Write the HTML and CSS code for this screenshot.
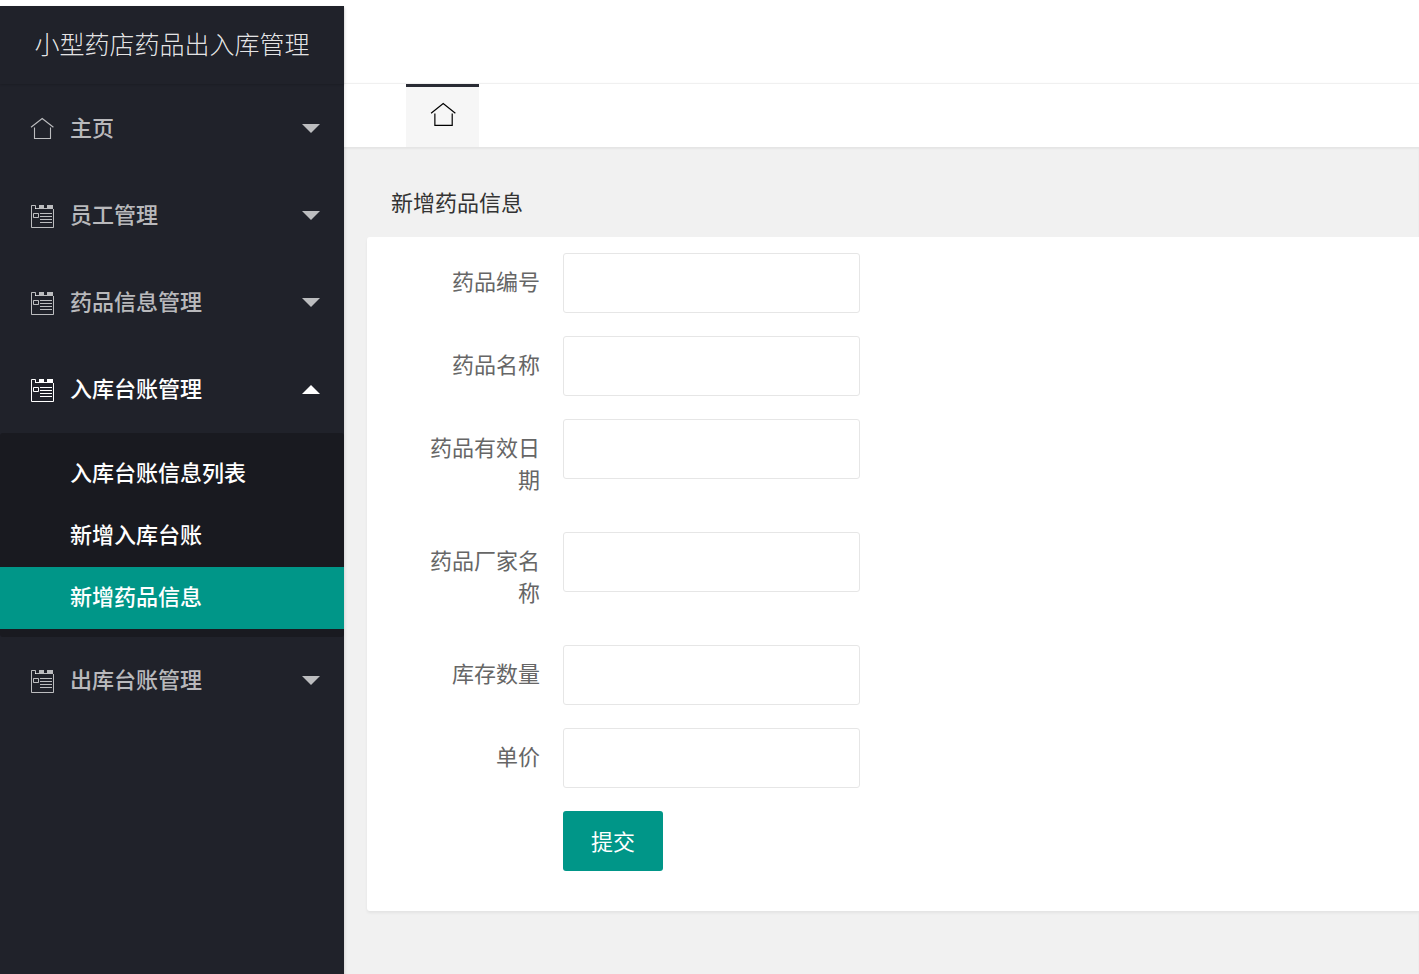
FILE: index.html
```html
<!DOCTYPE html>
<html lang="zh-CN">
<head>
<meta charset="utf-8">
<title>新增药品信息</title>
<link rel="stylesheet" href="styles.css">
</head>
<body>
<svg class="sprite" aria-hidden="true">
  <symbol id="home" viewBox="0 0 24 24">
    <path d="M1 10.3 12.2 1.5l11.2 8.8M4.5 10.5v11h16v-11" fill="none" stroke="currentColor" stroke-width="1.1"/>
  </symbol>
  <symbol id="notes" viewBox="0 0 24 24">
    <path d="M5.5 5V1.5h-4v22h22V5" fill="none" stroke="currentColor"/>
    <path d="M5 4h18v1H5zM9 1h5v4H9zM17 1h6v4h-6z" fill="currentColor"/>
    <path d="M3.5 9.5h5v4h-5zM10 9.5h12M10 12.5h12M10 15.5h12M10 18.5h12" fill="none" stroke="currentColor"/>
  </symbol>
  <symbol id="down" viewBox="0 0 18 9"><path d="M0 0h18L9 9z" fill="currentColor"/></symbol>
  <symbol id="up" viewBox="0 0 18 9"><path d="M0 9h18L9 0z" fill="currentColor"/></symbol>
</svg>
<div class="app">
  <aside class="sidebar">
    <div class="logo">小型药店药品出入库管理</div>
    <nav class="menu">
      <button class="menu-item" type="button"><svg class="icon"><use href="#home"/></svg><span class="menu-text">主页</span><svg class="arrow"><use href="#down"/></svg></button>
      <button class="menu-item" type="button"><svg class="icon"><use href="#notes"/></svg><span class="menu-text">员工管理</span><svg class="arrow"><use href="#down"/></svg></button>
      <button class="menu-item" type="button"><svg class="icon"><use href="#notes"/></svg><span class="menu-text">药品信息管理</span><svg class="arrow"><use href="#down"/></svg></button>
      <button class="menu-item open" type="button" aria-expanded="true"><svg class="icon"><use href="#notes"/></svg><span class="menu-text">入库台账管理</span><svg class="arrow"><use href="#up"/></svg></button>
      <div class="submenu">
        <a class="sub-item" href="#list">入库台账信息列表</a>
        <a class="sub-item" href="#add-entry">新增入库台账</a>
        <a class="sub-item active" href="#add-drug">新增药品信息</a>
      </div>
      <button class="menu-item" type="button"><svg class="icon"><use href="#notes"/></svg><span class="menu-text">出库台账管理</span><svg class="arrow"><use href="#down"/></svg></button>
    </nav>
  </aside>
  <div class="main">
    <header class="header"></header>
    <div class="tabs">
      <a class="tab" href="#home-page" aria-label="主页"><svg class="tab-icon"><use href="#home"/></svg></a>
    </div>
    <main class="content">
      <h1 class="title">新增药品信息</h1>
      <form class="card">
        <div class="row"><label class="label" for="code">药品编号</label><input class="input" id="code" type="text"></div>
        <div class="row"><label class="label" for="name">药品名称</label><input class="input" id="name" type="text"></div>
        <div class="row"><label class="label" for="expiry">药品有效日期</label><input class="input" id="expiry" type="text"></div>
        <div class="row"><label class="label" for="maker">药品厂家名称</label><input class="input" id="maker" type="text"></div>
        <div class="row"><label class="label" for="stock">库存数量</label><input class="input" id="stock" type="text"></div>
        <div class="row"><label class="label" for="price">单价</label><input class="input" id="price" type="text"></div>
        <div class="row actions"><button class="submit" type="button">提交</button></div>
      </form>
    </main>
  </div>
</div>
</body>
</html>
```
FILE: styles.css
```css
* { box-sizing: border-box; }

body {
  margin: 0;
  padding-top: 6px;
  background: #fff;
  font: 22px/32px "Noto Sans CJK SC", sans-serif;
  color: #333;
}

button, input { font: inherit; }
a { text-decoration: none; }
.sprite { display: none; }

.app {
  display: flex;
  min-height: calc(100vh - 6px);
}

.sidebar {
  position: relative;
  flex: 0 0 344px;
  background: #20222a;
  box-shadow: 1px 2px 3px rgba(0, 0, 0, .1);
}

.logo {
  height: 78px;
  line-height: 75px;
  font-size: 25px;
  font-weight: 300;
  text-align: center;
  color: rgba(255, 255, 255, .9);
  box-shadow: 0 1px 2px rgba(0, 0, 0, .15);
}

.menu {
  display: flex;
  flex-direction: column;
  padding-top: 1px;
}

.menu-item {
  display: flex;
  align-items: center;
  height: 87px;
  padding: 0 24px 0 30px;
  border: 0;
  background: none;
  color: rgba(255, 255, 255, .7);
  text-align: left;
}

.menu-item.open { color: #fff; }

.menu-text {
  flex: 1;
  padding-bottom: 6px;
  font-weight: 500;
}

.icon {
  width: 24px;
  height: 24px;
  margin-right: 16px;
}

.arrow {
  width: 18px;
  height: 9px;
}

.submenu {
  padding: 10px 0 8px;
  border-radius: 3px;
  background: #191a20;
}

.sub-item {
  display: block;
  padding: 0 0 6px 70px;
  font-weight: 500;
  line-height: 56px;
  color: #fff;
}

.sub-item.active { background: #009688; }

.main {
  display: flex;
  flex: 1;
  flex-direction: column;
  min-width: 0;
}

.header {
  height: 78px;
  border-bottom: 1px solid #f6f6f6;
}

.tabs {
  display: flex;
  height: 63px;
  padding-left: 62px;
  box-shadow: 0 1px 3px rgba(0, 0, 0, .15);
}

.tab {
  width: 73px;
  padding-top: 15px;
  border-top: 3px solid #292b34;
  background: #f6f6f6;
  color: #000;
  text-align: center;
  line-height: 0;
}

.tab-icon {
  width: 26px;
  height: 26px;
}

.content {
  flex: 1;
  padding: 23px 0 23px 23px;
  background: #f1f1f1;
  box-shadow: inset 0 2px 2px rgba(0, 0, 0, .05);
}

.title {
  margin: 0;
  padding: 0 24px 5px;
  font-size: 22px;
  font-weight: 400;
  line-height: 62px;
}

.card {
  display: flex;
  flex-direction: column;
  gap: 23px;
  padding: 16px 0 40px 24px;
  border-radius: 3px 0 0 3px;
  background: #fff;
  box-shadow: 0 2px 3px rgba(0, 0, 0, .06);
}

.row {
  display: flex;
  align-items: flex-start;
}

.label {
  width: 172px;
  padding: 11px 23px 15px;
  text-align: right;
  color: #666;
}

.input {
  width: 297px;
  height: 60px;
  padding: 0 16px;
  border: 1px solid #e6e6e6;
  border-radius: 3px;
  background: #fff;
}

.actions { padding-left: 172px; }

.submit {
  height: 60px;
  padding: 0 28px 3px;
  border: 0;
  border-radius: 3px;
  background: #009688;
  color: #fff;
}
```
